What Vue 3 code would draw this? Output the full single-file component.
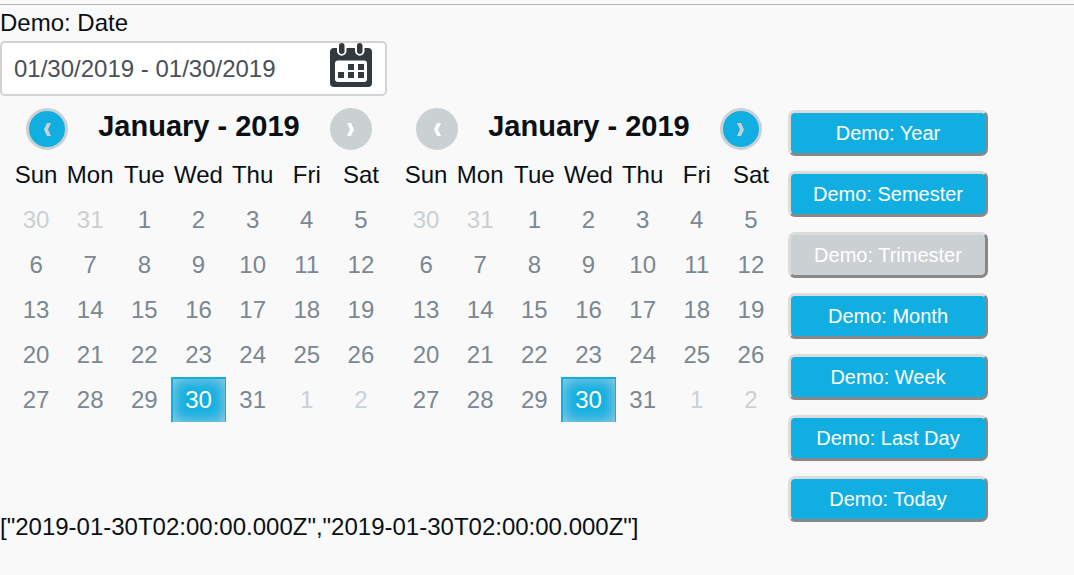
<script setup>
import { ref } from 'vue'

const weekdays = ['Sun', 'Mon', 'Tue', 'Wed', 'Thu', 'Fri', 'Sat']
const first = new Date(2019, 0, 1).getDay()
const weeks = Array.from({ length: 5 }, (_, w) =>
  Array.from({ length: 7 }, (_, d) => {
    const date = new Date(2019, 0, 1 - first + w * 7 + d)
    const outside = date.getMonth() !== 0
    return { day: date.getDate(), outside, selected: !outside && date.getDate() === 30 }
  })
)
const calendars = [
  { id: 'start', prevDisabled: false, nextDisabled: true },
  { id: 'end', prevDisabled: true, nextDisabled: false }
]
const presets = ['Year', 'Semester', 'Trimester', 'Month', 'Week', 'Last Day', 'Today']
const range = ref('01/30/2019 - 01/30/2019')
const value = JSON.stringify(['2019-01-30T02:00:00.000Z', '2019-01-30T02:00:00.000Z'])
</script>

<template>
  <main class="page">
    <label class="label" for="range">Demo: Date</label>
    <div class="field">
      <input id="range" v-model="range" class="input" type="text" />
      <svg class="icon" viewBox="0 0 42 44" aria-hidden="true">
        <rect y="5" width="42" height="39" rx="4" fill="#323a40" />
        <path d="M7 0h9.500v8a4.750 4.750 0 0 1-9.500 0zM25 0h9.500v8a4.750 4.750 0 0 1-9.500 0z" fill="#fff" />
        <rect x="9" width="5.500" height="11" rx="2.750" fill="#323a40" />
        <rect x="27" width="5.500" height="11" rx="2.750" fill="#323a40" />
        <rect x="5" y="17.500" width="32" height="21.500" rx="3" fill="#fff" />
        <path d="M18 21h6v6h-6zM28 21h6v6h-6zM8 29h6v6H8zM18 29h6v6h-6zM28 29h6v6h-6z" fill="#323a40" />
      </svg>
    </div>

    <div class="picker">
      <section v-for="cal in calendars" :key="cal.id" class="calendar">
        <header class="head">
          <button class="arrow" type="button" aria-label="Previous month" :disabled="cal.prevDisabled">
            <svg viewBox="0 0 7 13" aria-hidden="true"><path d="M3 0h4L4 6.500 7 13H3L0 6.500z" fill="currentColor" /></svg>
          </button>
          <h2 class="title">January - 2019</h2>
          <button class="arrow" type="button" aria-label="Next month" :disabled="cal.nextDisabled">
            <svg viewBox="0 0 7 13" aria-hidden="true"><path d="M4 0H0l3 6.500L0 13h4l3-6.500z" fill="currentColor" /></svg>
          </button>
        </header>
        <table class="days">
          <thead>
            <tr><th v-for="d in weekdays" :key="d" scope="col">{{ d }}</th></tr>
          </thead>
          <tbody>
            <tr v-for="(week, i) in weeks" :key="i">
              <td v-for="(c, j) in week" :key="j">
                <button class="day" :class="{ outside: c.outside, selected: c.selected }" type="button">{{ c.day }}</button>
              </td>
            </tr>
          </tbody>
        </table>
      </section>

      <nav class="presets">
        <button v-for="p in presets" :key="p" class="preset" type="button" :disabled="p === 'Trimester'">Demo: {{ p }}</button>
      </nav>
    </div>

    <output class="value">{{ value }}</output>
  </main>
</template>

<style>
body {
  background: #f9f9f9;
}
</style>

<style scoped>
.page {
  margin-top: 4px;
  border-top: 1px solid #b3b3b3;
  padding-top: 4px;
  color: #0a1014;
  font: 24px/28px "Liberation Sans", Arial, sans-serif;
}
.label {
  display: block;
  margin-bottom: 4px;
}
.field {
  position: relative;
  max-width: 387px;
}
.input {
  display: block;
  box-sizing: border-box;
  width: 100%;
  height: 55px;
  padding: 0 64px 0 12px;
  border: 2px solid #d3d3d3;
  border-radius: 5px;
  background: #fff;
  color: #495057;
  font: inherit;
}
.icon {
  position: absolute;
  top: 2px;
  right: 15px;
  width: 42px;
  height: 44px;
}
.picker {
  display: flex;
  align-items: flex-start;
  padding-top: 12px;
}
.calendar {
  box-sizing: border-box;
  flex: 0 1 390px;
  padding: 0 2px 0 9px;
}
.head {
  display: flex;
  justify-content: space-between;
  padding: 0 16px 0 17px;
}
.title {
  margin: 0;
  font-size: 29px;
  line-height: 36px;
  font-weight: 700;
}
.arrow {
  display: flex;
  align-items: center;
  justify-content: center;
  width: 42px;
  height: 42px;
  padding: 0;
  border: 3px solid #cbd0d3;
  border-radius: 50%;
  background: #11afe1;
  color: #cbd0d3;
}
.arrow svg {
  width: 7px;
  height: 13px;
}
.arrow:disabled {
  background: #cbd0d3;
  color: #fff;
}
.days {
  width: 100%;
  margin-top: 2px;
  border-collapse: collapse;
  table-layout: fixed;
}
.days th,
.days td {
  height: 45px;
  padding: 0;
  font-weight: 400;
  text-align: center;
}
.day {
  display: block;
  width: 100%;
  height: 45px;
  padding: 0;
  border: 0;
  background: none;
  color: #7b8791;
  font: inherit;
}
.day.outside {
  color: #cbd0d3;
}
.day.selected {
  padding: 0 1px 2px 0;
  border: solid #11afe1;
  border-width: 2px 1px 0 2px;
  background: #11afe1;
  box-shadow: inset 0 0 15px #b0cfe0;
  color: #fff;
}
.presets {
  display: flex;
  flex: 0 1 200px;
  flex-direction: column;
  gap: 15px;
  margin: 2px 0 0 8px;
}
.preset {
  height: 46px;
  padding: 0;
  border: 3px solid;
  border-color: #dcdcdc #888 #888 #dcdcdc;
  border-radius: 7px;
  background: #11afe1;
  color: #fff;
  font: 20px/24px "Liberation Sans", Arial, sans-serif;
}
.preset:disabled {
  background: #cbd0d3;
}
.value {
  display: block;
  margin-top: -9px;
}
</style>
